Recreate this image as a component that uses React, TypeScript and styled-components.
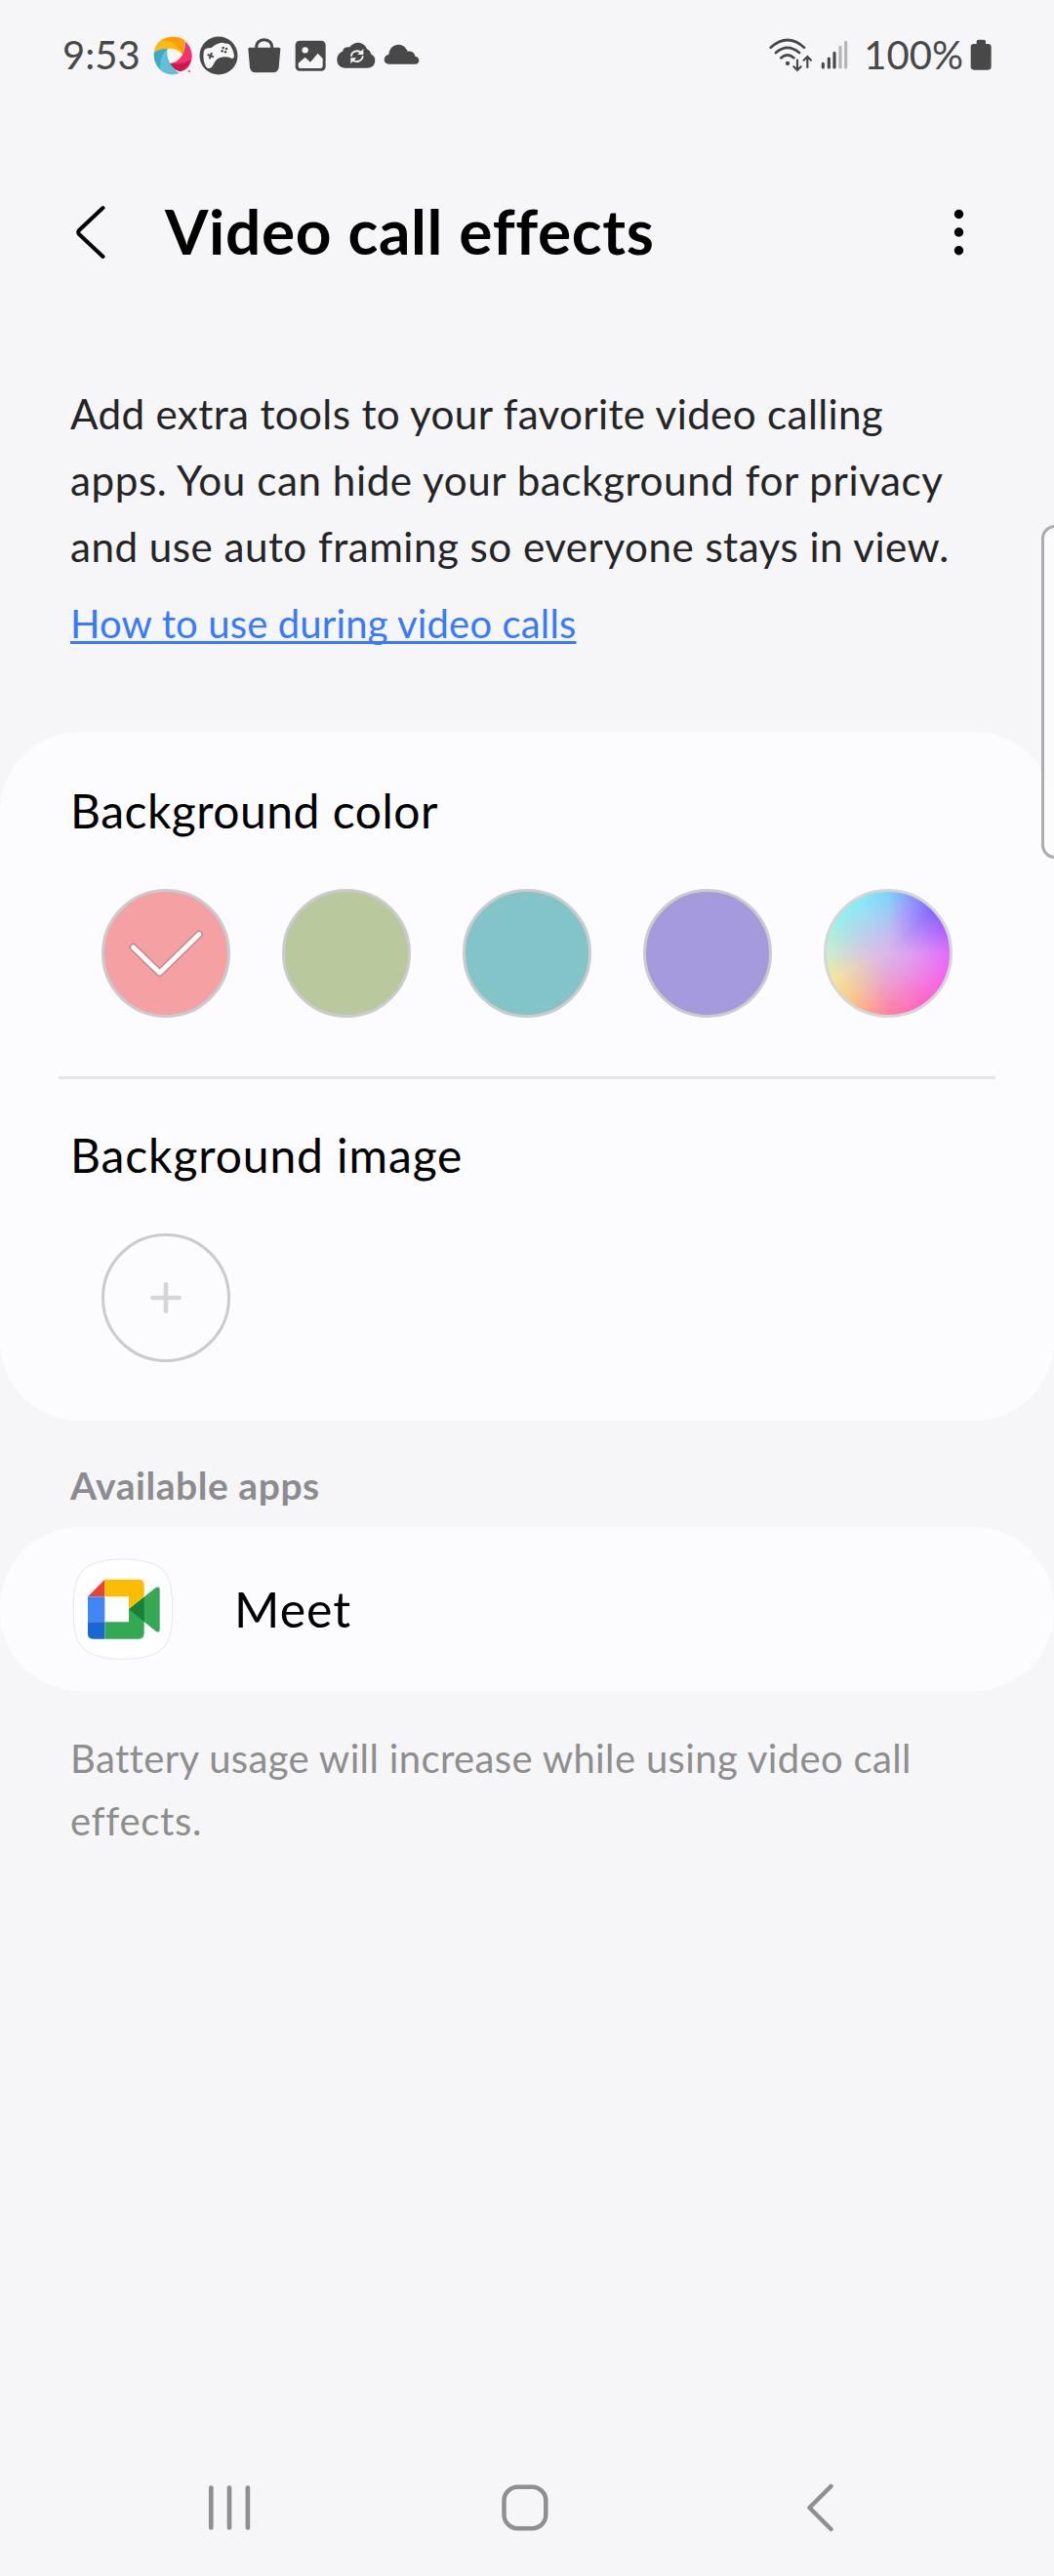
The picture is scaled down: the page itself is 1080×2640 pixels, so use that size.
import React from "react";
import styled, { createGlobalStyle } from "styled-components";

const GlobalStyle = createGlobalStyle`
  * { box-sizing: border-box; }
  body { margin: 0; background: #f6f6f8; }
`;

const Screen = styled.div`
  position: relative;
  display: flex;
  flex-direction: column;
  width: 1080px;
  height: 2640px;
  overflow: hidden;
  background: #f6f6f8;
  color: #000;
  font-family: Lato, "Open Sans", sans-serif;
  font-variant-ligatures: none;
`;

const StatusBar = styled.header`
  display: flex;
  justify-content: space-between;
  align-items: center;
  height: 114px;
  padding: 0 64px 0 64px;
  color: #484848;
`;

const StatusGroup = styled.div`
  display: flex;
  align-items: center;
`;

const StatusText = styled.span<{ $indent?: number }>`
  margin-left: ${(p) => p.$indent ?? 0}px;
  padding-bottom: 2px;
  font-size: 40px;
  line-height: 48px;
`;

const StatusIcon = styled.svg<{ $w: number; $gap: number }>`
  flex: none;
  width: ${(p) => p.$w}px;
  height: 40px;
  margin-left: ${(p) => p.$gap}px;
`;

const TitleBar = styled.div`
  display: flex;
  align-items: center;
  height: 248px;
  padding: 0 87px 0 76px;
`;

const Title = styled.h1`
  flex: 1;
  margin: 0 0 2px 59px;
  font-size: 64px;
  line-height: 76px;
  font-weight: 700;
  letter-spacing: 0.65px;
`;

const Icon = styled.svg<{ $w: number; $h: number }>`
  flex: none;
  display: block;
  width: ${(p) => p.$w}px;
  height: ${(p) => p.$h}px;
`;

const Intro = styled.section`
  padding: 28px 72px 86px;
`;

const TextLine = styled.span<{ $spacing: number }>`
  display: block;
  white-space: nowrap;
  letter-spacing: ${(p) => p.$spacing}px;
`;

const IntroText = styled.p`
  margin: 0;
  font-size: 42.2px;
  line-height: 68px;
  color: #252528;
`;

const HelpLink = styled.a`
  display: block;
  width: max-content;
  margin-top: 20px;
  font-size: 40px;
  line-height: 50px;
  color: #387aff;
  letter-spacing: 0.14px;
  text-decoration: underline;
  text-decoration-thickness: 3px;
  text-underline-offset: 3px;
  text-decoration-skip-ink: none;
`;

const Card = styled.section`
  flex: none;
  background: #fcfcff;
  border-radius: 82px;
`;

const OptionGroup = styled.div<{ $top: number }>`
  padding: ${(p) => p.$top}px 72px 60px;
`;

const OptionTitle = styled.h2<{ $spacing: number }>`
  margin: 0;
  font-size: 48px;
  line-height: 56px;
  font-weight: 400;
  letter-spacing: ${(p) => p.$spacing}px;
`;

const Swatches = styled.div`
  display: flex;
  gap: 53px;
  margin-top: 52px;
  padding-left: 32px;
`;

const Swatch = styled.button<{ $fill: string; $ring?: string }>`
  display: grid;
  place-items: center;
  width: 132px;
  height: 132px;
  padding: 0;
  border: 3px solid ${(p) => p.$ring ?? "#cbcbcd"};
  border-radius: 50%;
  background: ${(p) => p.$fill};
  background-origin: border-box;
`;

const Divider = styled.hr`
  height: 3px;
  margin: 0 60px;
  border: 0;
  background: #e4e4e6;
`;

const SectionLabel = styled.h3`
  margin: 42px 72px 19px;
  font-size: 39px;
  line-height: 48px;
  font-weight: 700;
  color: #8c8c90;
  letter-spacing: 0.55px;
`;

const AppRow = styled.div`
  display: flex;
  align-items: center;
  gap: 62px;
  height: 168px;
  padding-left: 74px;
`;

const AppName = styled.span`
  font-size: 50px;
  line-height: 60px;
  letter-spacing: 1px;
`;

const Footnote = styled.p`
  margin: 37px 72px 0;
  font-size: 40px;
  line-height: 64px;
  color: #8e8e8e;
`;

const NavBar = styled.nav`
  display: flex;
  justify-content: space-between;
  align-items: center;
  height: 140px;
  margin-top: auto;
  padding: 0 215px 0 210px;
`;

const EdgeHandle = styled.div`
  position: absolute;
  top: 538px;
  right: -20px;
  width: 33px;
  height: 342px;
  border: 3px solid #acacad;
  border-radius: 14px;
  background: rgba(252, 252, 252, 0.75);
`;

const spectrum = [
  "radial-gradient(circle closest-side, #dab6ea 0%, rgba(218,182,234,0.75) 30%, rgba(218,182,234,0) 95%)",
  `conic-gradient(#7ad6fa 0deg, #8a98ff 22deg, #8468ff 45deg, #a860ff 65deg, #e06cfb 90deg,
    #f763ec 115deg, #ff64c4 145deg, #ff80a0 180deg, #ffa88c 200deg, #fbcb84 220deg,
    #f8e698 245deg, #c8f0cc 270deg, #98f2e8 300deg, #84eef8 330deg, #7ad6fa 360deg)`,
].join(", ");

const colors = [
  { fill: "#f5a0a3", selected: true },
  { fill: "#b9c89d" },
  { fill: "#82c4c8" },
  { fill: "#a59adb" },
  { fill: spectrum, ring: "#d5d5d8" },
];

const CheckMark = () => (
  <Icon $w={126} $h={126} viewBox="107 914 126 126" fill="none" strokeLinecap="round" strokeLinejoin="round">
    <path d="M136.5 970.7 163.6 997 204 957.5" stroke="#c48a8d" strokeWidth="8" />
    <path d="M136.5 970.7 163.6 997 204 957.5" stroke="#fff" strokeWidth="4.8" />
  </Icon>
);

const NotificationIcons = () => (
  <>
    <StatusIcon $w={40} $gap={13} viewBox="322 52 120 120">
      <path d="M324 100C330 70 352 54 382 54c15 0 27 4 37 11l-5 46c-14-18-35-25-54-19-14 2-26 4-36 8z" fill="#fdb813" />
      <path d="M345 66c26-2 52 8 69 44l5-45c-20-14-48-15-74 1z" fill="#ff9c08" />
      <path d="M420 68c24 22 27 54 12 76-6 9-18 16-30 16l-30-24c24-2 50-22 48-68z" fill="#ef3470" />
      <path d="M372 135c24 5 46 3 66-12-4 18-16 32-32 38-18-4-28-14-34-26z" fill="#cf1747" />
      <path d="M324 104c12-9 26-14 42-13-5 24 4 50 36 76-28 9-54-1-68-22-8-12-11-26-10-41z" fill="#5fc0da" />
      <path d="M326 100c12-6 24-9 40-9-16 12-22 30-23 60-14-12-20-30-17-51z" fill="#3fa9c4" />
      <path d="M428 158h8v4h-6z" fill="#ef3470" />
    </StatusIcon>
    <StatusIcon $w={40} $gap={7} viewBox="463 52 120 120">
      <circle cx="523" cy="112" r="58.5" fill="#484848" />
      <path d="M477 103C477 95 482 90 491 89L501 88C506 82 513 77 522 75C528 72 537 71 543 75C551 74 557 77 560 83C566 92 570 103 571 113C571 120 565 123 559 119C553 116 547 115 541 116C532 117 524 119 517 124C512 130 508 136 505 143C501 152 491 154 485 147C477 135 475 118 477 103Z" fill="#f6f6f8" />
      <path d="M489 109l19 7M502 103l-7 19" stroke="#484848" strokeWidth="6" />
      <g fill="#484848"><circle cx="537" cy="88" r="3.8" /><circle cx="547" cy="91" r="3.8" /><circle cx="534" cy="98" r="3.8" /><circle cx="544" cy="101" r="3.8" /></g>
    </StatusIcon>
    <StatusIcon $w={34} $gap={10} viewBox="614 52 102 120">
      <path d="M615 91q0-4 5-4h89q5 0 5 4l-5 58q-2 15-18 15h-53q-16 0-18-15z" fill="#484848" />
      <path d="M640 90v-4c0-30 48-30 48 0v4" fill="none" stroke="#484848" strokeWidth="9" />
    </StatusIcon>
    <StatusIcon $w={32} $gap={14} viewBox="757 52 96 120">
      <rect x="759" y="66" width="93" height="93" rx="13" fill="#484848" />
      <circle cx="789" cy="95" r="9.5" fill="#f6f6f8" />
      <path d="M768 135l21-18 16 15 23-27 15 16v23q0 7-7 7h-61q-7 0-7-7z" fill="#f6f6f8" />
    </StatusIcon>
    <StatusIcon $w={40} $gap={11} viewBox="887 52 120 120">
      <path d="M914 150c-17 0-26-11-26-26 0-12 7-21 17-25 2-12 12-15 22-13 14-20 44-18 53 6 8 3 12 9 12 15 8 4 13 10 13 19 0 15-10 24-25 24z" fill="#484848" />
      <g fill="none" stroke="#f6f6f8" strokeWidth="5.5"><path d="M932 114c0-14 19-22 30-11" /><path d="M967 113c0 15-20 23-31 12" /></g>
      <path d="M969 91v18h-18zM930 137v-18h18z" fill="#f6f6f8" />
    </StatusIcon>
    <StatusIcon $w={37} $gap={8} viewBox="1032 52 111 120">
      <path d="M1048 138c-19 0-18-27 0-29 3-38 47-41 58-10 13-2 22 5 23 15 16 2 16 24 0 24z" fill="#484848" />
    </StatusIcon>
  </>
);

const MeetIcon = () => (
  <Icon $w={104} $h={104} viewBox="102 170 312 312">
    <path d="M258 173c58 0 100 11 123 34s29 61 29 120-6 96-29 119-65 34-123 34-100-11-123-34-29-60-29-119 6-97 29-120 65-34 123-34z" fill="#fff" stroke="#e6e6e8" strokeWidth="3" />
    <path d="M150 288l52-53v53z" fill="#ea4335" />
    <path d="M202 235h104q17 0 17 17v36l-47 39v-39h-74z" fill="#fbbc04" />
    <path d="M150 288h52v78h-52z" fill="#4285f4" />
    <path d="M150 366h52v52h-36q-16 0-16-16z" fill="#1967d2" />
    <path d="M202 366h74v-39l47 36v38q0 17-17 17H202z" fill="#34a853" />
    <path d="M276 327l83-67q12-5 12 5v124q0 12-12 5z" fill="#34a853" />
    <path d="M276 327l47-38v76z" fill="#188038" />
  </Icon>
);

export default function App() {
  return (
    <Screen>
      <GlobalStyle />
      <StatusBar>
        <StatusGroup>
          <StatusText>9:53</StatusText>
          <NotificationIcons />
        </StatusGroup>
        <StatusGroup>
          <StatusIcon $w={44} $gap={0} viewBox="61 52 132 120" fill="none" stroke="#484848" strokeLinecap="round">
            <path d="M66 87q52-46 103 0M82 103q35-31 72 0M98 119q20-18 39 0" strokeWidth="8" />
            <circle cx="118" cy="136" r="6.5" fill="#484848" stroke="none" />
            <path d="M148 126v30M137 146l11 11 11-11M179 148v-32M168 126l11-11 11 11" strokeWidth="6.5" />
          </StatusIcon>
          <StatusIcon $w={28} $gap={9} viewBox="220 52 84 120" strokeWidth="9.5" strokeLinecap="round">
            <path d="M227 137v11M245 121v27M262 104v44" stroke="#484848" />
            <path d="M280 86v62M297 71v77" stroke="#b5b5b6" />
          </StatusIcon>
          <StatusText $indent={16}>100%</StatusText>
          <StatusIcon $w={22} $gap={7} viewBox="673 52 66 120" fill="#484848">
            <path d="M693 76v-8q0-5 5-5h18q5 0 5 5v8h7q10 0 10 10v60q0 10-10 10h-43q-10 0-10-10V86q0-10 10-10z" />
          </StatusIcon>
        </StatusGroup>
      </StatusBar>

      <TitleBar>
        <Icon $w={34} $h={60} viewBox="76 208 34 60" fill="none" stroke="#000" strokeWidth="4" strokeLinecap="round" strokeLinejoin="round">
          <path d="M105.500 213 81 236q-1.500 2 0 4L105.500 263" />
        </Icon>
        <Title>Video call effects</Title>
        <Icon $w={20} $h={60} viewBox="973 208 20 60">
          <circle cx="982.500" cy="219.500" r="4.700" />
          <circle cx="982.500" cy="238" r="4.700" />
          <circle cx="982.500" cy="256.700" r="4.700" />
        </Icon>
      </TitleBar>

      <Intro>
        <IntroText>
          <TextLine $spacing={0.34}>Add extra tools to your favorite video calling</TextLine>
          <TextLine $spacing={0.56}>apps. You can hide your background for privacy</TextLine>
          <TextLine $spacing={0.46}>and use auto framing so everyone stays in view.</TextLine>
        </IntroText>
        <HelpLink>How to use during video calls</HelpLink>
      </Intro>

      <Card>
        <OptionGroup $top={53}>
          <OptionTitle $spacing={0.5}>Background color</OptionTitle>
          <Swatches>
            {colors.map((c) => (
              <Swatch key={c.fill} $fill={c.fill} $ring={c.ring}>
                {c.selected && <CheckMark />}
              </Swatch>
            ))}
          </Swatches>
        </OptionGroup>
        <Divider />
        <OptionGroup $top={50}>
          <OptionTitle $spacing={0.9}>Background image</OptionTitle>
          <Swatches>
            <Swatch $fill="transparent">
              <Icon $w={36} $h={36} viewBox="0 0 36 36" stroke="#d5d5d6" strokeWidth="4.600" strokeLinecap="round">
                <path d="M18 4.300v27.400M4.300 18h27.400" />
              </Icon>
            </Swatch>
          </Swatches>
        </OptionGroup>
      </Card>

      <SectionLabel>Available apps</SectionLabel>
      <Card>
        <AppRow>
          <MeetIcon />
          <AppName>Meet</AppName>
        </AppRow>
      </Card>
      <Footnote>
        <TextLine $spacing={0.36}>Battery usage will increase while using video call</TextLine>
        <TextLine $spacing={0.7}>effects.</TextLine>
      </Footnote>

      <NavBar>
        <Icon $w={50} $h={50} viewBox="210 2545 50 50" stroke="#8f8f8f" strokeWidth="4.700" strokeLinecap="round">
          <path d="M216.300 2549.500v41M235 2549.500v41M253.900 2549.500v41" />
        </Icon>
        <Icon $w={50} $h={50} viewBox="512 2545 50 50" fill="none" stroke="#8f8f8f" strokeWidth="4.500">
          <rect x="515.500" y="2548.700" width="42.800" height="42.600" rx="14" />
        </Icon>
        <Icon $w={50} $h={50} viewBox="815 2545 50 50" fill="none" stroke="#8f8f8f" strokeWidth="4.500" strokeLinecap="round" strokeLinejoin="round">
          <path d="M851.500 2548 829.500 2570 851.500 2592" />
        </Icon>
      </NavBar>
      <EdgeHandle />
    </Screen>
  );
}
